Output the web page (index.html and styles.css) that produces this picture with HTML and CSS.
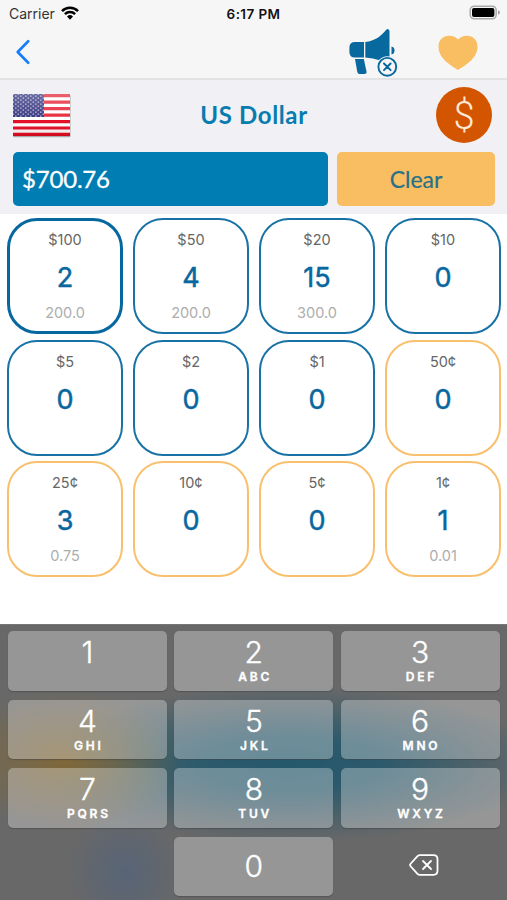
FILE: index.html
```html
<!DOCTYPE html>
<html lang="en">
<head>
<meta charset="utf-8">
<title>US Dollar</title>
<link rel="stylesheet" href="styles.css">
</head>
<body>
<header class="top">
  <div class="status">
    <div class="carrier"><span>Carrier</span>
      <svg class="wifi" width="18" height="14" viewBox="0 0 18 14" fill="none" stroke="#000" stroke-width="2.5"><path d="M1 5.1a11.4 11.4 0 0 1 16 0M3.9 8.1a7.3 7.3 0 0 1 10.2 0"/><path d="M6 10.5a4.3 4.3 0 0 1 6 0L9 13.7z" fill="#000" stroke="none"/></svg>
    </div>
    <span class="time">6:17 PM</span>
    <svg class="battery" width="32" height="16" viewBox="0 0 32 16"><rect x="1.2" y="1.2" width="26" height="12.6" rx="4" fill="#f7f6f7" stroke="#a9a9a9" stroke-width="1.5"/><rect x="3" y="3" width="22.4" height="9" rx="2" fill="#000"/><path d="M29 5.2q2 .7 2 2.3t-2 2.3z" fill="#a0a0a0"/></svg>
  </div>
  <nav class="nav">
    <svg class="back" width="16" height="26" viewBox="0 0 16 26" fill="none" stroke="#147efb" stroke-width="2.7" stroke-linecap="round" stroke-linejoin="round"><path d="M13.2 2.3 2.7 13l10.5 10.7"/></svg>
    <svg class="horn" width="50" height="50" viewBox="0 0 50 50"><g fill="#08699f"><path d="M16 14v15.500H7q-5.600 0-5.600-5.500v-4.500Q1.400 14 7 14z"/><path d="M17.300 14C27 13 33 8 38 2q1.200-1.200 2.200-.8 1.300.5 1.300 2.300V38q-8-7.500-24.200-8.500z"/><path d="M43.500 18.500q3 .5 3 4t-3 4z"/><path d="M7 31h8.800l2.700 12.500q.4 2.400-2 2.400h-5q-1.800 0-2.200-2z"/></g><circle cx="39.300" cy="38.800" r="10.600" fill="#f7f6f7"/><circle cx="39.300" cy="38.800" r="8.900" fill="#f7f6f7" stroke="#08699f" stroke-width="1.900"/><path d="m36 35.500 6.600 6.600m0-6.600L36 42.100" stroke="#08699f" stroke-width="2" stroke-linecap="round"/></svg>
    <svg class="heart" width="40" height="36" viewBox="0 0 40 36"><path d="M20 35C14 31 .5 24 .5 11.500.5 5 5 .8 11 .8c4 0 7 1.500 9 3.600C22 2.300 25 .8 29 .8c6 0 10.500 4.200 10.500 10.700C39.500 24 26 31 20 35z" fill="#f9bd62"/></svg>
  </nav>
</header>
<section class="panel">
  <div class="heading">
    <svg class="flag" width="60" height="45" viewBox="0 0 60 45">
      <defs>
        <pattern id="stars" width="5" height="4" patternUnits="userSpaceOnUse"><path d="M1.300.4v1.600M.5 1.200h1.600M3.800 2.400V4M3 3.200h1.600" stroke="#a5a3cb" stroke-width=".8"/></pattern>
        <linearGradient id="gloss" x1="0" y1="0" x2="0" y2="1"><stop offset="0" stop-color="#fff" stop-opacity=".35"/><stop offset=".55" stop-color="#fff" stop-opacity=".15"/><stop offset=".56" stop-color="#fff" stop-opacity="0"/><stop offset="1" stop-color="#600" stop-opacity=".16"/></linearGradient>
      </defs>
      <rect x="1" y="2" width="57.500" height="42.200" rx="1" fill="#aaa"/>
      <rect x="1" y="1" width="57" height="42" fill="#fff"/>
      <path d="M1 2.600h57M1 9.100h57M1 15.600h57M1 22.100h57M1 28.600h57M1 35h57M1 41.400h57" stroke="#e30b20" stroke-width="3.200"/>
      <rect x="1" y="1" width="31" height="23" fill="#1c1c70"/><rect x="1" y="1" width="31" height="23" fill="url(#stars)"/>
      <rect x="1" y="1" width="57" height="42" fill="url(#gloss)"/>
    </svg>
    <h1>US Dollar</h1>
    <div class="coin">$</div>
  </div>
  <div class="totals">
    <div class="amount">$700.76</div>
    <button class="clear">Clear</button>
  </div>
</section>
<main class="grid">
  <div class="card active"><span>$100</span><b>2</b><small>200.0</small></div>
  <div class="card"><span>$50</span><b>4</b><small>200.0</small></div>
  <div class="card"><span>$20</span><b>15</b><small>300.0</small></div>
  <div class="card"><span>$10</span><b>0</b></div>
  <div class="card"><span>$5</span><b>0</b></div>
  <div class="card"><span>$2</span><b>0</b></div>
  <div class="card"><span>$1</span><b>0</b></div>
  <div class="card cent"><span>50¢</span><b>0</b></div>
  <div class="card cent"><span>25¢</span><b>3</b><small>0.75</small></div>
  <div class="card cent"><span>10¢</span><b>0</b></div>
  <div class="card cent"><span>5¢</span><b>0</b></div>
  <div class="card cent"><span>1¢</span><b>1</b><small>0.01</small></div>
</main>
<section class="keyboard">
  <div class="key">1</div>
  <div class="key">2<i>ABC</i></div>
  <div class="key">3<i>DEF</i></div>
  <div class="key">4<i>GHI</i></div>
  <div class="key">5<i>JKL</i></div>
  <div class="key">6<i>MNO</i></div>
  <div class="key">7<i>PQRS</i></div>
  <div class="key">8<i>TUV</i></div>
  <div class="key">9<i>WXYZ</i></div>
  <div class="key zero">0</div>
  <div class="delete"><svg width="30" height="22" viewBox="0 0 30 22" fill="none" stroke="#fff" stroke-width="1.800" stroke-linecap="round" stroke-linejoin="round"><path d="M11 1.200h13.500q4 0 4 4v11.600q0 4-4 4H11q-1.500 0-2.500-1l-6.700-7.300q-1.400-1.500 0-3l6.700-7.300q1-1 2.500-1z"/><path d="m14 7 8 8m0-8-8 8"/></svg></div>
</section>
</body>
</html>
```
FILE: styles.css
```css
* { box-sizing: border-box; }
body { margin: 0; width: 507px; height: 900px; overflow: hidden; background: #fff; font-family: Inter, "Liberation Sans", sans-serif; display: flex; flex-direction: column; }
svg { display: block; flex: none; }
.top { height: 80px; flex: none; background: #f7f6f7; border-bottom: 2px solid #e3e2e5; }
.status { height: 27px; display: grid; grid-template-columns: 1fr auto 1fr; align-items: center; padding: 0 6px 0 9px; margin-bottom: 1px; }
.carrier { display: flex; align-items: center; gap: 6px; font-size: 14px; letter-spacing: 0; color: #333; }
.wifi { margin-top: -1px; }
.time { font-size: 13.500px; font-weight: 600; color: #111; letter-spacing: .4px; margin-left: -3px; }
.battery { justify-self: end; margin-top: -1px; }
.nav { height: 50px; display: flex; align-items: flex-start; padding: 0 29px 0 15px; }
.back { margin-top: 11px; }
.horn { margin-left: auto; }
.heart { margin: 7px 0 0 40px; }
.panel { height: 134px; flex: none; background: #f1f0f5; padding: 7px 12px 0 13px; }
.heading { height: 65px; display: grid; grid-template-columns: 60px 1fr 60px; }
.flag { margin-top: 6px; margin-left: -1px; }
h1 { margin: 0; text-align: center; font: 700 24px/56px Lato, sans-serif; color: #087caf; letter-spacing: .65px; }
.coin { width: 56px; height: 56px; margin-left: 1px; border-radius: 50%; background: #d45500; color: #ffe8d5; font: 300 38px/58px Roboto, sans-serif; text-align: center; }
.totals { display: flex; gap: 9px; }
.amount { width: 315px; height: 54px; border-radius: 5px; background: #007db3; color: #fff; font: 400 24px/54px Lato, sans-serif; letter-spacing: -.2px; padding-left: 9px; -webkit-text-stroke: .3px #fff; }
.clear { width: 158px; height: 54px; border: 0; border-radius: 5px; background: #f9be61; color: #26718b; font: 400 23px/54px Lato, sans-serif; -webkit-text-stroke: .2px #26718b; padding: 0; }
.grid { height: 410px; flex: none; display: grid; grid-template-columns: repeat(4, 116px); grid-auto-rows: 116px; gap: 5.700px 10px; padding: 4px 7px 0; }
.card { border: 2px solid #1972a5; border-radius: 30px; display: flex; flex-direction: column; align-items: center; padding-top: 10px; }
.card.active { border-width: 3px; border-color: #0768a0; padding-top: 9px; }
.card.cent { border-color: #f8c06d; }
.card span { font-size: 14.500px; line-height: 20px; color: #666; }
.card b { font-size: 27px; line-height: 34px; font-weight: 400; -webkit-text-stroke: .5px #08679f; color: #08679f; margin-top: 11px; }
.card small { font-size: 14.500px; line-height: 20px; color: #adadad; margin-top: 8px; }
.keyboard { flex: 1; padding: 6px 7px 0 8px; display: grid; grid-template-columns: repeat(3, 159px); grid-auto-rows: 59.500px; gap: 9px 7.300px; border-top: 1px solid #777;
  background: radial-gradient(ellipse 115px 70px at 65px 135px, #806838 0%, #80683899 40%, #80683800 100%), radial-gradient(ellipse 58px 65px at 125px 247px, #53637acc, #53637a00), radial-gradient(ellipse 260px 78px at 290px 139px, #24586c 0%, #24586cdd 35%, #24586c00 100%), #686868; }
.key { border-radius: 5px; background: rgba(255,255,255,.31); color: #fff; box-shadow: 0 1px 1px #4448; display: flex; flex-direction: column; align-items: center; font-size: 30px; font-weight: 300; -webkit-text-stroke: .35px #fff; line-height: 42px; }
.key i { font: 600 12px/14px Inter, sans-serif; letter-spacing: 2.800px; margin-right: -2.800px; margin-top: -3px; }
.zero { grid-column: 2; line-height: 58px; }
.delete { display: grid; place-items: center; }
.delete svg { margin-right: -7px; margin-top: -2px; }
```
